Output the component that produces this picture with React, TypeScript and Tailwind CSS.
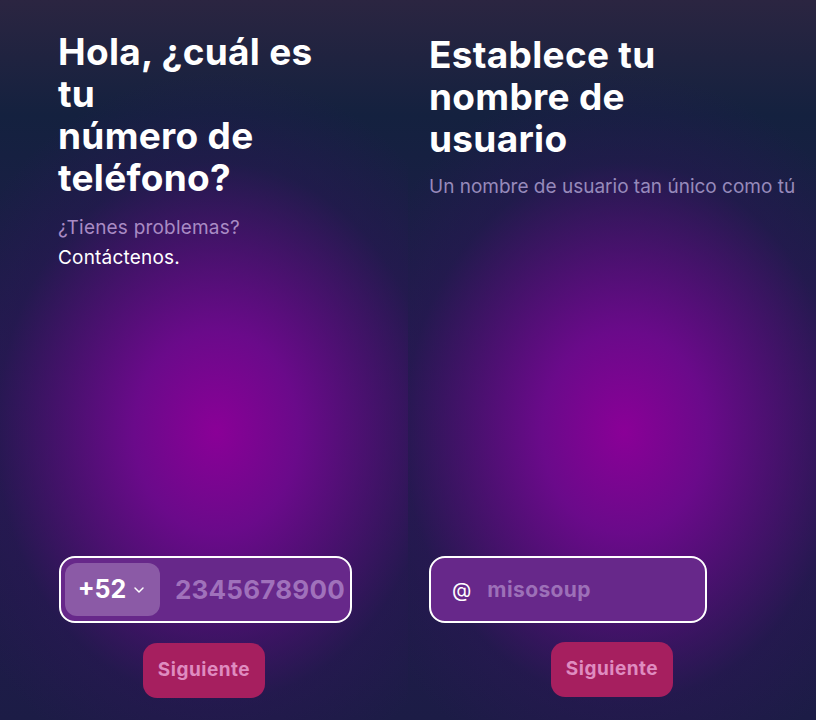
import { ChevronDown } from 'lucide-react'

// Two onboarding steps shown side by side: phone number, then username.

const panelBg =
  'bg-[radial-gradient(ellipse_72%_50%_at_53%_60%,#8a0097_0%,#6a0a8a_28%,rgba(48,20,90,0.35)_75%,rgba(40,20,80,0)_100%),linear-gradient(to_bottom,#2b2541_0%,#14213f_16%,#221a4e_55%,#1c1c46_100%)]'

function NextButton() {
  return (
    <div className="flex justify-center">
      <button
        type="button"
        className="h-[55px] w-[122px] rounded-[14px] bg-[#a61f5f] text-[19px] font-bold tracking-[0.5px] text-[#df8cc0]"
      >
        Siguiente
      </button>
    </div>
  )
}

function PhoneStep() {
  return (
    <div className={'flex h-[720px] w-[408px] flex-col ' + panelBg}>
      <div className="pl-[58px] pt-[31px]">
        <h1 className="text-[37px] font-bold leading-[42px] tracking-[0.3px] text-white">
          Hola, ¿cuál es
          <br />
          tu
          <br />
          número de
          <br />
          teléfono?
        </h1>
        <p className="mt-[14px] text-[19px] leading-[30px] tracking-[0.2px] text-[#a98bc4]">¿Tienes problemas?</p>
        <p className="text-[19px] leading-[30px] tracking-[0.2px] text-white">Contáctenos.</p>
      </div>

      <div className="flex-1" />

      <div className="pb-[22px]">
        <div className="ml-[59px] flex h-[67px] w-[293px] items-center gap-[15px] overflow-hidden rounded-[16px] border-2 border-white bg-[#67288a] px-[4px]">
          <div className="flex h-[53px] w-[95px] shrink-0 items-center justify-center gap-[5px] rounded-[12px] bg-[#8b5aa6]">
            <span className="text-[25px] font-bold text-white">+52</span>
            <ChevronDown className="h-4 w-4 text-white" strokeWidth={2.2} />
          </div>
          <span className="whitespace-nowrap text-[26px] font-bold tracking-[0.2px] text-[#a071bb]">2345678900</span>
        </div>
        <div className="mt-[20px]">
          <NextButton />
        </div>
      </div>
    </div>
  )
}

function UsernameStep() {
  return (
    <div className={'flex h-[720px] w-[408px] flex-col ' + panelBg}>
      <div className="pl-[21px] pt-[34px]">
        <h1 className="text-[37px] font-bold leading-[42px] tracking-[0.3px] text-white">
          Establece tu
          <br />
          nombre de
          <br />
          usuario
        </h1>
        <p className="mt-[12px] whitespace-nowrap text-[19px] leading-[30px] text-[#978abb]">
          Un nombre de usuario tan único como tú
        </p>
      </div>

      <div className="flex-1" />

      <div className="pb-[23px]">
        <div className="ml-[21px] flex h-[67px] w-[278px] items-center gap-[16px] rounded-[16px] border-2 border-white bg-[#67288a] pl-[21px]">
          <span className="text-[20px] text-white">@</span>
          <span className="text-[21px] font-bold tracking-[0.4px] text-[#9d70b8]">misosoup</span>
        </div>
        <div className="mt-[19px]">
          <NextButton />
        </div>
      </div>
    </div>
  )
}

export default function App() {
  return (
    <div className="flex h-[720px] w-[816px] overflow-hidden font-['Inter','Liberation_Sans',sans-serif]">
      <PhoneStep />
      <UsernameStep />
    </div>
  )
}
